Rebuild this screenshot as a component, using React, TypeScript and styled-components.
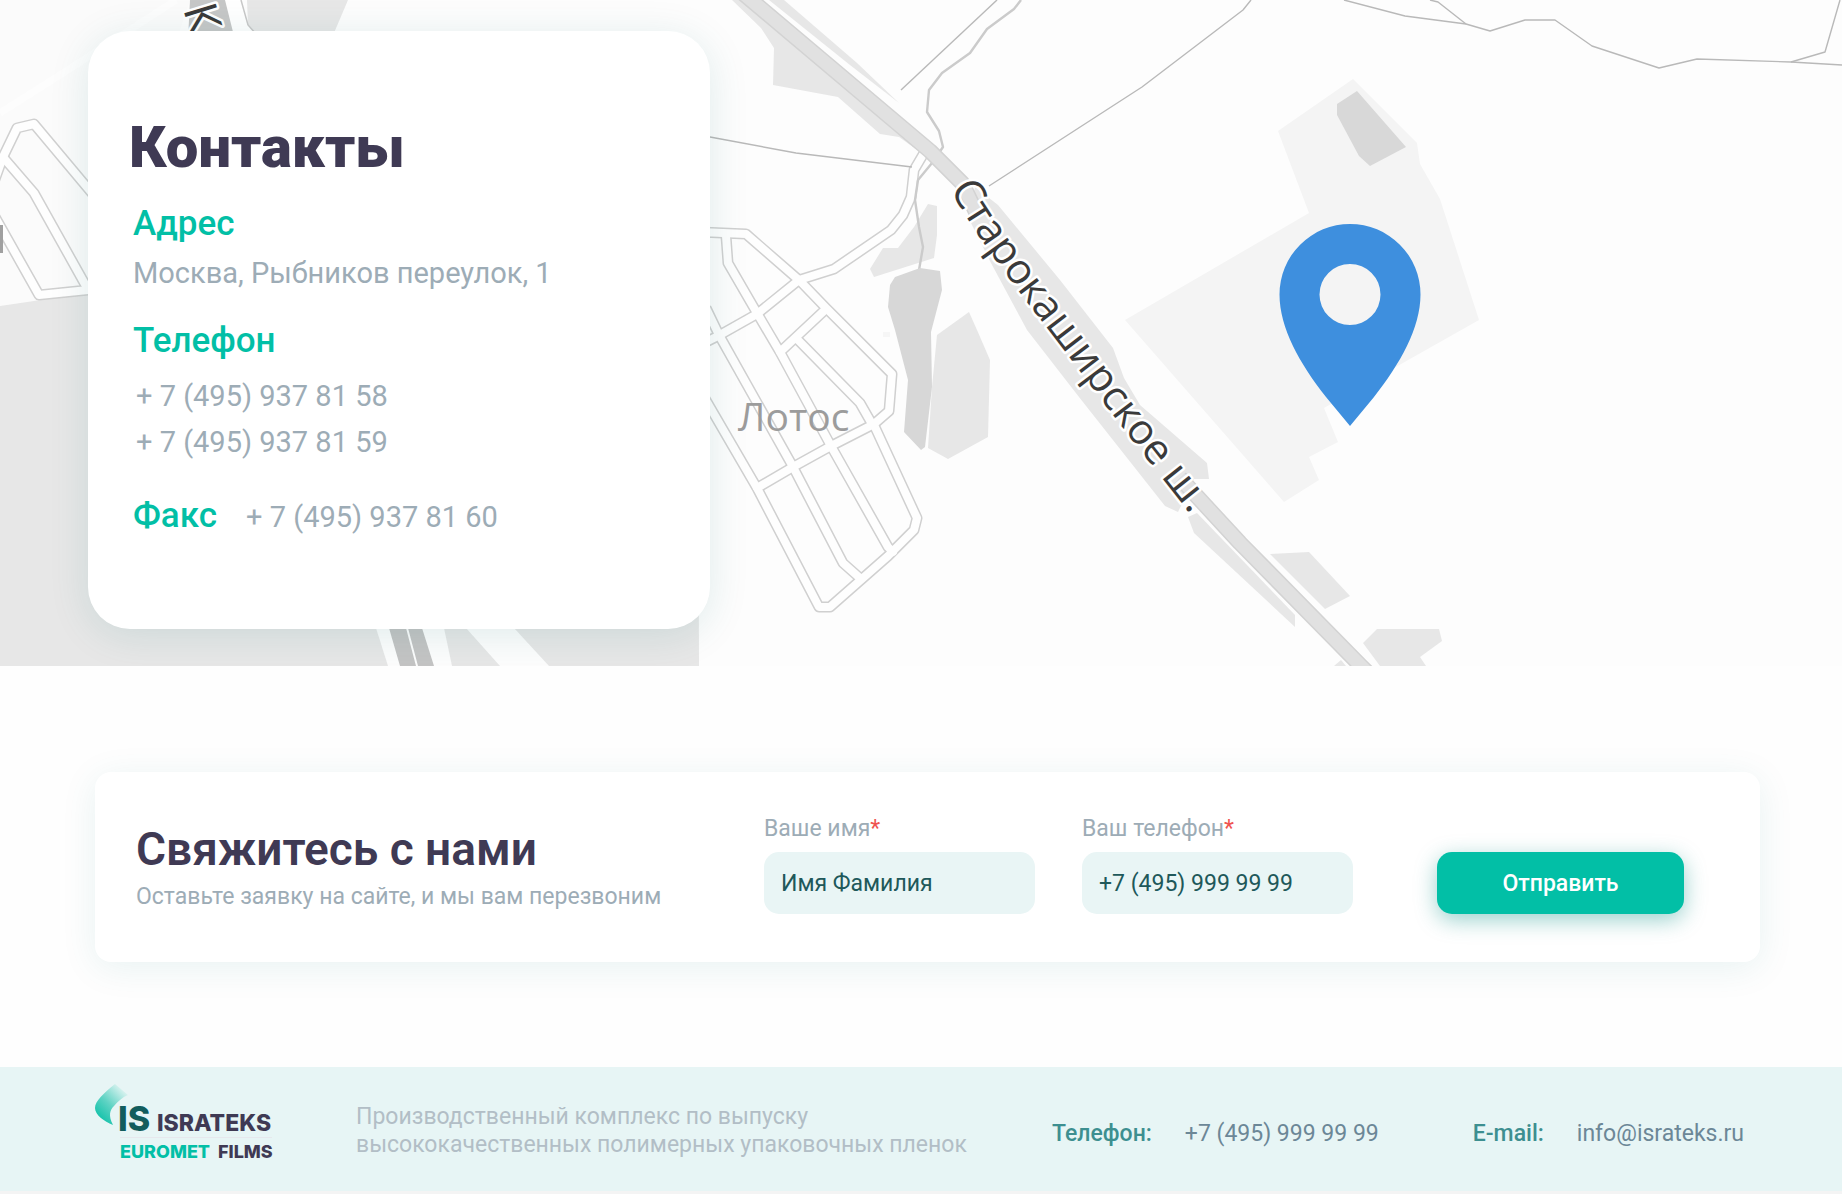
import React from "react";
import styled, { createGlobalStyle } from "styled-components";

const GlobalStyle = createGlobalStyle`
  *, *::before, *::after { box-sizing: border-box; }
  body {
    margin: 0;
    background: #fefefe;
    font-family: Roboto, "Noto Sans", sans-serif;
    color: #3f3a54;
  }
  h1, h2, h3, p { margin: 0; }
  a { color: inherit; text-decoration: none; }
`;

const Page = styled.div`
  background: #fefefe;
`;

/* ---------- Map with contacts ---------- */

const MapSection = styled.section`
  position: relative;
  overflow: hidden;
  padding: 31px 88px 37px;
  background: #fdfdfd;
`;

const MapCanvas = styled.svg`
  position: absolute;
  inset: 0;
  width: 100%;
  height: 100%;
`;

const ContactsCard = styled.div`
  position: relative;
  width: 622px;
  max-width: 100%;
  padding: 82px 41px 93px;
  border-radius: 42px;
  background: #fff;
  box-shadow: 0 6px 40px rgba(0, 110, 110, 0.12);
`;

const ContactsTitle = styled.h1`
  font-size: 58px;
  line-height: 68px;
  font-weight: 900;
`;

const ContactsList = styled.div`
  display: flex;
  flex-direction: column;
  gap: 31px;
  padding: 23px 0 0 4px;
`;

const ContactGroup = styled.div<{ $inline?: boolean }>`
  display: flex;
  flex-direction: ${(p) => (p.$inline ? "row" : "column")};
  align-items: ${(p) => (p.$inline ? "baseline" : "flex-start")};
  gap: ${(p) => (p.$inline ? "29px" : "12px")};
`;

const ContactLabel = styled.h2`
  font-size: 35px;
  line-height: 40px;
  font-weight: 500;
  color: #02bfa6;
`;

const ContactText = styled.p`
  font-size: 29px;
  line-height: 34px;
  color: #9dacb6;
`;

const PhoneList = styled.div`
  display: flex;
  flex-direction: column;
  padding-left: 3px;
`;

const PhoneLink = styled.a<{ $tall?: boolean }>`
  font-size: 29px;
  line-height: ${(p) => (p.$tall ? "46px" : "34px")};
  color: #9dacb6;
`;

/* ---------- Request form ---------- */

const RequestSection = styled.section`
  padding: 106px 82px 105px 95px;
`;

const RequestForm = styled.form`
  display: grid;
  grid-template-columns: minmax(0, 1fr) auto 247px;
  align-items: end;
  column-gap: 84px;
  padding: 42px 76px 48px 41px;
  border-radius: 16px;
  background: #fff;
  box-shadow: 0 6px 36px rgba(0, 120, 120, 0.09);
`;

const RequestIntro = styled.div`
  display: flex;
  flex-direction: column;
  gap: 4px;
  white-space: nowrap;
`;

const RequestTitle = styled.h2`
  font-size: 46px;
  line-height: 54px;
  font-weight: 600;
`;

const RequestHint = styled.p`
  font-size: 23px;
  line-height: 34px;
  color: #9dacb6;
`;

const Fields = styled.div`
  display: flex;
  gap: 47px;
`;

const Field = styled.label`
  display: flex;
  flex-direction: column;
  gap: 9px;
  width: 271px;
  padding-top: 1px;
  font-size: 23px;
  line-height: 28px;
  color: #9dacb6;
`;

const Required = styled.span`
  color: #ef5350;
`;

const TextInput = styled.input`
  width: 100%;
  height: 62px;
  padding: 0 17px;
  border: 0;
  border-radius: 15px;
  background: #e9f5f5;
  color: #20585a;
  font: inherit;
`;

const SubmitButton = styled.button`
  height: 62px;
  border: 0;
  border-radius: 15px;
  background: #02bfa6;
  box-shadow: 0 6px 22px rgba(0, 140, 130, 0.4);
  color: #fff;
  font: inherit;
  font-size: 23px;
  font-weight: 500;
  cursor: pointer;
`;

/* ---------- Footer ---------- */

const Footer = styled.footer`
  display: flex;
  align-items: center;
  min-height: 127px;
  padding: 4px 98px 0 95px;
  border-bottom: 3px solid #f4f4f4;
  background: #e7f5f5;
  font-size: 23px;
  line-height: 28px;
`;

const LogoLink = styled.a`
  display: flex;
  flex: none;
  align-self: flex-start;
  width: 180px;
  margin-right: 81px;
  padding-top: 9px;
`;

const Tagline = styled.p`
  color: #b2bec6;
`;

const FooterContacts = styled.div`
  display: flex;
  gap: 94px;
  margin-left: auto;
  white-space: nowrap;
`;

const FooterContact = styled.div`
  display: flex;
  gap: 33px;
  padding-top: 5px;
`;

const FooterLabel = styled.span`
  font-weight: 500;
  color: #3d8f90;
`;

const FooterLink = styled.a`
  color: #6c8797;
`;

/* ---------- Drawings ---------- */

const villageRoads = [
  "M924 153L914 170L911 197L903 215L891 230L834 269L799 280L757 314L718 336L700 345",
  "M700 232L746 234L800 281L826 308L892 374L889 411L874 424L831 446L793 467L757 488",
  "M726 236L728 263L757 313L780 352L831 446L888 547L893 552",
  "M826 309L780 352",
  "M798 340L860 403L872 424",
  "M874 425L917 518L914 530L888 556L830 607L819 607L757 488L700 390",
  "M706 308L719 335L792 465L843 563L861 579",
  "M-6 182L3 157L17 128L34 124L96 198",
  "M3 157L34 193L86 286L88 290L39 295L-6 215",
];

const footpaths = [
  "M997 0L901 90",
  "M1251 0L1243 10L1142 87L989 186",
  "M710 137L796 153L912 167",
  "M1344 0L1405 16L1466 24L1490 31L1525 20L1555 20L1592 46L1659 68L1697 59L1791 62L1842 65",
  "M1430 0L1438 2L1466 24",
  "M1840 0L1825 52L1791 62",
];

const landPlots = [
  "M732 0L761 28L774 48L773 85L838 97L880 134L899 137L920 152L740 0Z",
  "M769 0L784 0L857 63L899 103L850 65Z",
  "M928 204L937 206L937 235L934 258L874 277L870 269L883 248L898 248L914 227Z",
  "M969 312L977 330L990 360L988 437L948 459L928 448L932 387L937 335Z",
  "M998 205L1060 280L1113 348L1124 378L1140 405L1207 463L1209 479L1194 479L1178 512L1165 506L1079 397L1027 330L991 263L968 217L975 187Z",
  "M1188 517L1194 533L1295 627L1295 615L1197 513Z",
  "M1270 554L1309 552L1350 596L1325 609Z",
  "M1377 629L1439 629L1442 641L1420 657L1426 666L1380 666L1363 643Z",
  "M1334 666L1341 660L1346 666Z",
  "M0 306L88 293L698 293L699 666L0 666Z",
  "M247 0L348 0L331 40L260 40L248 25Z",
];

function CityMap() {
  return (
    <MapCanvas viewBox="0 0 1842 666" preserveAspectRatio="xMidYMid slice" aria-hidden="true">
      <path d="M0 0H190L170 60L88 90V293L0 306Z" fill="#fbfbfb" />
      <path d="M0 113L60 75L176 0" fill="none" stroke="#fdfdfd" strokeWidth="7" />
      <path
        d="M1353 79L1417 143L1420 164L1440 199L1479 320L1394 368L1324 408L1338 442L1309 457L1319 480L1284 502L1125 320L1309 213L1278 131Z"
        fill="#f4f4f4"
      />
      {landPlots.map((d) => (
        <path key={d} d={d} fill="#e7e7e7" />
      ))}
      <path d="M883 332h7v5h-7z" fill="#f6f6f6" />

      <path d="M376 628L388 666H452L444 628Z" fill="#fdfdfd" />
      <path d="M389 628L400 666H416L406 628ZM408 628L418 666H434L422 628Z" fill="#c4c4c4" />
      <path d="M466 628L500 666H549L514 628Z" fill="#fdfdfd" />
      <path d="M222 0H241L248 25L254 40H230Z" fill="#fff" />
      <path d="M190 0H225L235 40H188Z" fill="#c6c7c7" />
      <path d="M241 0L248 25L256 34" fill="none" stroke="#c8c8c8" strokeWidth="1.5" />

      <g fill="none" strokeLinejoin="round">
        {villageRoads.map((d) => (
          <path key={d} d={d} stroke="#d0d0d0" strokeWidth="11" />
        ))}
        {villageRoads.map((d) => (
          <path key={d} d={d} stroke="#fefefe" strokeWidth="8" strokeLinecap="round" />
        ))}
        {footpaths.map((d) => (
          <path key={d} d={d} stroke="#b9b9b9" strokeWidth="1.4" />
        ))}
        <path
          d="M1021 0L1014 9L987 29L970 53L942 73L929 90L927 112L939 131L943 147L932 163L918 180L915 200L919 227L923 247L919 270"
          stroke="#cbcbcb"
          strokeWidth="2.4"
        />
      </g>

      <path
        d="M920 268L940 271L942 290L931 332L932 387L925 447L921 450L904 432L908 380L895 330L888 307L890 285L895 277Z"
        fill="#d7d7d7"
      />
      <path d="M1337 104L1357 91L1406 147L1370 166L1359 156L1337 115Z" fill="#d8d8d8" />

      <g fill="none" strokeLinejoin="round">
        <path d="M739 -10L751 0L930 151L962 183L976 212" stroke="#d3d3d3" strokeWidth="16" />
        <path d="M739 -10L751 0L930 151L962 183L976 212" stroke="#e1e1e1" strokeWidth="13" />
        <path d="M1180 478L1240 543L1361 666L1371 676" stroke="#d3d3d3" strokeWidth="16" />
        <path d="M1180 478L1240 543L1361 666L1371 676" stroke="#e1e1e1" strokeWidth="13" />
      </g>

      <path id="highway" d="M950 189C981 247 1035 311 1085 378S1156 470 1211 540" fill="none" />
      <g fontFamily='"Open Sans", "Noto Sans", sans-serif'>
        <text x="738" y="431" fontSize="39" fill="#9c9c9c">
          Лотос
        </text>
        <g fill="#3a3a3a" fontWeight="500" stroke="#fff" strokeWidth="5" strokeLinejoin="round" paintOrder="stroke">
          <text fontSize="42">
            <textPath href="#highway">Старокаширское ш.</textPath>
          </text>
          <text transform="translate(183 9) rotate(73)" fontSize="46">
            К
          </text>
        </g>
      </g>
      <rect x="0" y="225" width="3" height="28" fill="#a0a0a0" />

      <path
        fillRule="evenodd"
        fill="#3e8fde"
        d="M1350 426L1326 397C1300 364 1279.500 328 1279.500 294.500A70.500 70.500 0 0 1 1420.500 294.500C1420.500 328 1400 364 1374 397ZM1350 264A30.500 30.500 0 1 0 1350 325A30.500 30.500 0 1 0 1350 264Z"
      />
    </MapCanvas>
  );
}

function Logo() {
  return (
    <svg width="180" height="84" viewBox="0 0 180 84" role="img" aria-label="ISRATEKS EUROMET FILMS">
      <defs>
        <linearGradient id="leaf" x1="0.2" y1="0.9" x2="0.85" y2="0.1">
          <stop offset="0" stopColor="#14c2aa" />
          <stop offset="0.45" stopColor="#5fd3c4" />
          <stop offset="1" stopColor="#dff4f2" />
        </linearGradient>
      </defs>
      <path d="M20 4C9 13 0 21 0 28C0 35 9 41 18 45C13 35 15 30 19 26C23 21 28 17 33 15Z" fill="url(#leaf)" />
      <g fontFamily="Inter, sans-serif">
        <text x="23" y="51" fontSize="34" fontWeight="800" fill="#125d5d">
          IS
        </text>
        <text x="62" y="51" fontSize="23" fontWeight="800" fill="#3f3a54">
          ISRATEKS
        </text>
        <rect x="25" y="57" width="152" height="1" fill="#e6e8ed" />
        <text x="25" y="78" fontSize="18" fontWeight="800" fill="#02bfa6">
          EUROMET
        </text>
        <text x="123" y="78" fontSize="18" fontWeight="800" fill="#3f3a54">
          FILMS
        </text>
      </g>
    </svg>
  );
}

export default function App() {
  return (
    <Page>
      <GlobalStyle />
      <MapSection>
        <CityMap />
        <ContactsCard>
          <ContactsTitle>Контакты</ContactsTitle>
          <ContactsList>
            <ContactGroup>
              <ContactLabel>Адрес</ContactLabel>
              <ContactText>Москва, Рыбников переулок, 1</ContactText>
            </ContactGroup>
            <ContactGroup>
              <ContactLabel>Телефон</ContactLabel>
              <PhoneList>
                <PhoneLink $tall href="tel:+74959378158">+ 7 (495) 937 81 58</PhoneLink>
                <PhoneLink $tall href="tel:+74959378159">+ 7 (495) 937 81 59</PhoneLink>
              </PhoneList>
            </ContactGroup>
            <ContactGroup $inline>
              <ContactLabel>Факс</ContactLabel>
              <PhoneLink href="tel:+74959378160">+ 7 (495) 937 81 60</PhoneLink>
            </ContactGroup>
          </ContactsList>
        </ContactsCard>
      </MapSection>

      <RequestSection>
        <RequestForm onSubmit={(e) => e.preventDefault()}>
          <RequestIntro>
            <RequestTitle>Свяжитесь с нами</RequestTitle>
            <RequestHint>Оставьте заявку на сайте, и мы вам перезвоним</RequestHint>
          </RequestIntro>
          <Fields>
            <Field htmlFor="name">
              <span>Ваше имя<Required>*</Required></span>
              <TextInput id="name" type="text" defaultValue="Имя Фамилия" />
            </Field>
            <Field htmlFor="phone">
              <span>Ваш телефон<Required>*</Required></span>
              <TextInput id="phone" type="tel" defaultValue="+7 (495) 999 99 99" />
            </Field>
          </Fields>
          <SubmitButton type="submit">Отправить</SubmitButton>
        </RequestForm>
      </RequestSection>

      <Footer>
        <LogoLink href="#">
          <Logo />
        </LogoLink>
        <Tagline>
          Производственный комплекс по выпуску
          <br />
          высококачественных полимерных упаковочных пленок
        </Tagline>
        <FooterContacts>
          <FooterContact>
            <FooterLabel>Телефон:</FooterLabel>
            <FooterLink href="tel:+74959999999">+7 (495) 999 99 99</FooterLink>
          </FooterContact>
          <FooterContact>
            <FooterLabel>E-mail:</FooterLabel>
            <FooterLink href="mailto:info@israteks.ru">info@israteks.ru</FooterLink>
          </FooterContact>
        </FooterContacts>
      </Footer>
    </Page>
  );
}
